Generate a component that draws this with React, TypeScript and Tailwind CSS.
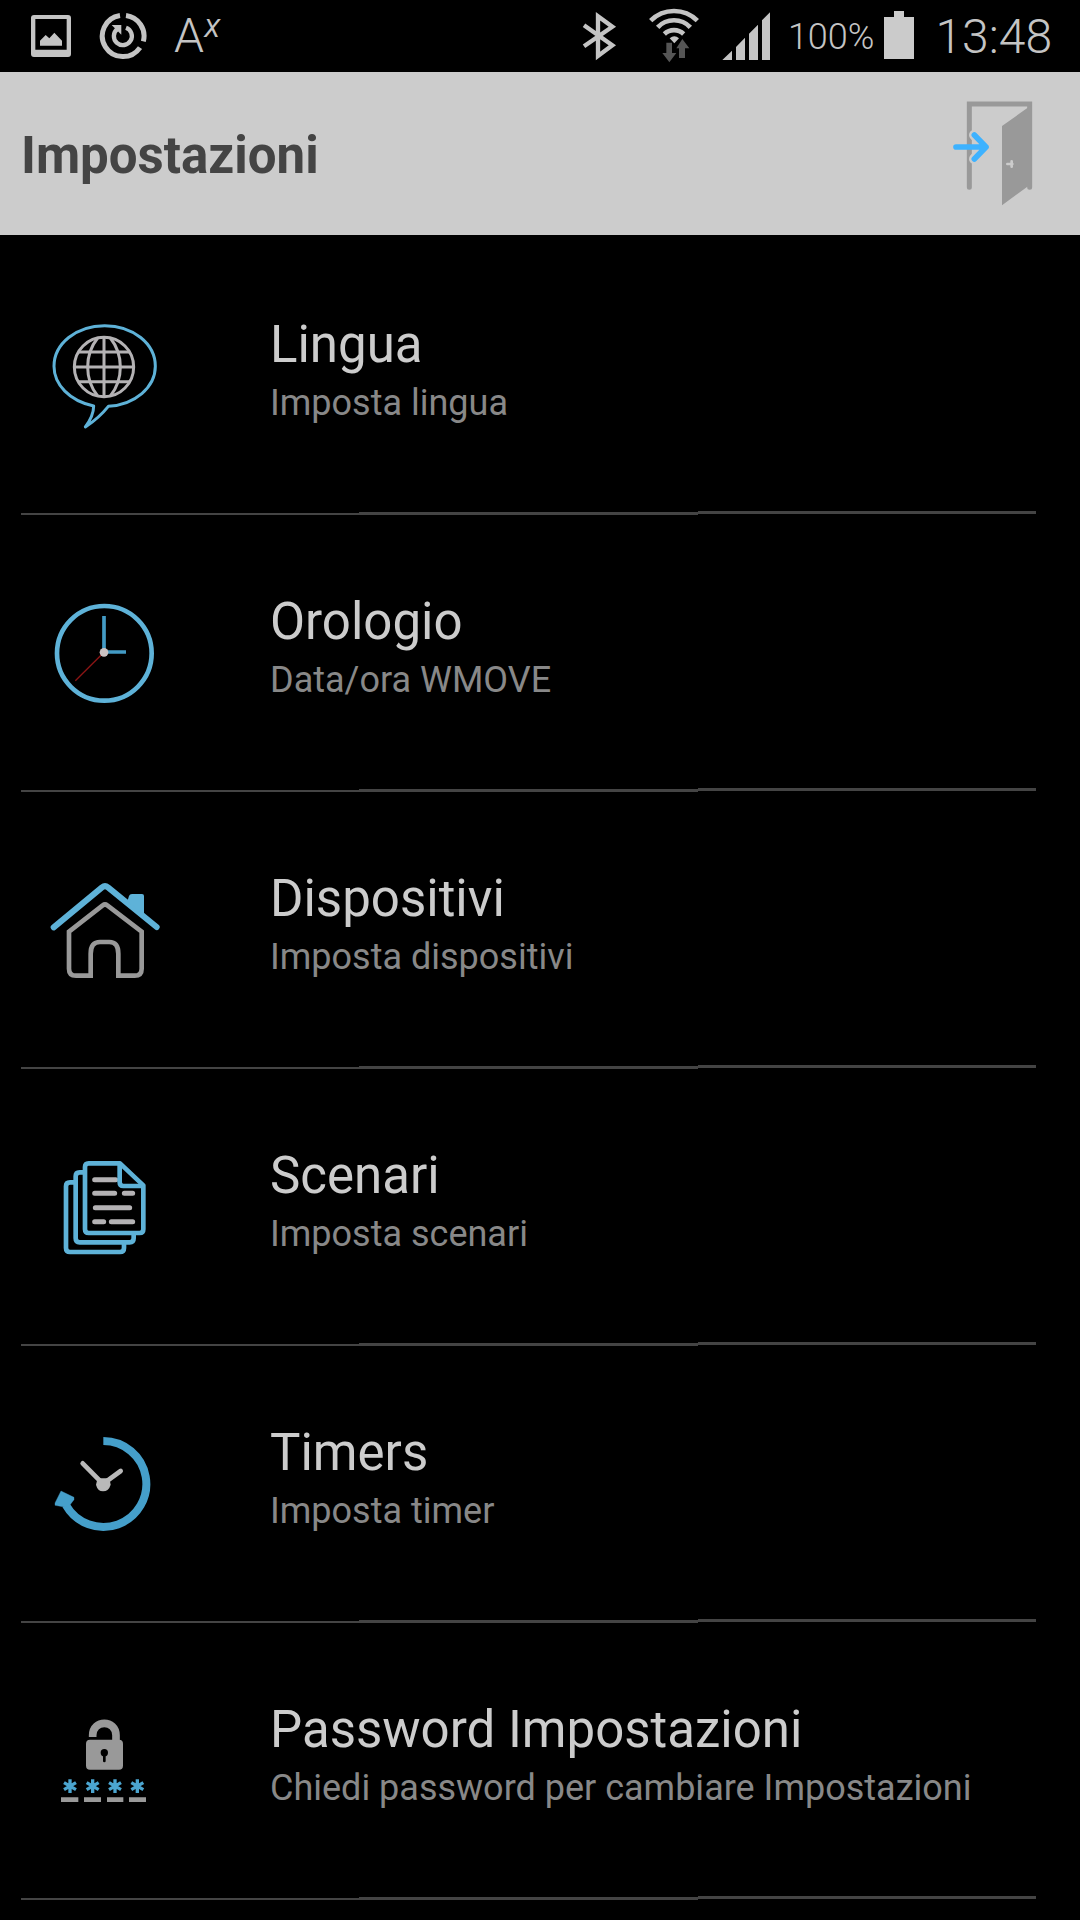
import * as React from "react";

const BLUE = "#5eb2d8";
const GREY = "#b4b2b4";

function ImageIcon() {
  return (
    <svg viewBox="90 0 126 216" className="h-[72px] w-[42px]" fill="#c4c4c4" aria-hidden="true">
      <path fillRule="evenodd" d="M102 45H204Q213 45 213 54V162Q213 171 204 171H102Q93 171 93 162V54Q93 45 102 45ZM106 57V149H200V57Z" />
      <path d="M120 137V122L137 105L148 115L163 98L186 122V137Z" />
    </svg>
  );
}

function SyncIcon() {
  return (
    <svg viewBox="297 0 144 216" className="h-[72px] w-[48px]" fill="none" stroke="#c4c4c4" aria-hidden="true">
      <path d="M360 46.500A62 62 0 1 0 420 143" strokeWidth="15" />
      <path d="M378 46.500A62 62 0 0 1 430 124" strokeWidth="15" />
      <path d="M378 83A27 27 0 1 1 352 87" strokeWidth="13" />
      <path d="M335 75H364V104Z" fill="#c4c4c4" stroke="none" />
    </svg>
  );
}

function BluetoothIcon() {
  return (
    <svg viewBox="66 0 105 216" className="h-[72px] w-[35px]" fill="none" stroke="#c4c4c4" strokeWidth="13" aria-hidden="true">
      <path d="M72 76L157 136L114 168V49L157 80L72 139" />
    </svg>
  );
}

function WifiIcon() {
  return (
    <svg viewBox="267 0 150 216" className="h-[72px] w-[50px]" aria-hidden="true">
      <g fill="none" stroke="#c4c4c4" strokeWidth="14">
        <path d="M272 62A99 99 0 0 1 412 62" />
        <path d="M293 82A67 67 0 0 1 391 82" />
        <path d="M313 102A42 42 0 0 1 371 102" />
      </g>
      <path d="M329 115Q343 102 357 115L343 130Z" fill="#c4c4c4" />
      <path d="M319 128H336V159H349L328 187L307 159H319Z" fill="#555" />
      <path d="M367 117L388 145H375V174H357V145H349Z" fill="#555" />
    </svg>
  );
}

function SignalIcon() {
  return (
    <svg viewBox="486 0 144 216" className="h-[72px] w-[48px]" fill="#c4c4c4" aria-hidden="true">
      <path d="M487 180L516 152V180ZM528 180V141L555 113V180ZM567 180V101L594 74V180ZM606 180V61L630 37V180Z" />
    </svg>
  );
}

function BatteryIcon() {
  return (
    <svg viewBox="972 0 90 216" className="h-[72px] w-[30px]" fill="#cbcbcb" aria-hidden="true">
      <path d="M1002 33H1032V51H1062V177H972V51H1002Z" />
    </svg>
  );
}

function ExitIcon() {
  return (
    <svg viewBox="0 -24 480 489" className="h-[163px] w-[160px]" aria-hidden="true">
      <path d="M148 322V72H329V322" fill="none" stroke="#999" strokeWidth="15" strokeLinecap="round" />
      <path d="M246 138L322 84L336 76V322L322 320L246 376Z" fill="#999" />
      <path d="M262 252H277M275 244V260" stroke="#ccc" strokeWidth="8" strokeLinecap="round" />
      <g fill="none" strokeLinecap="round" strokeLinejoin="round">
        <path d="M163 165L198 200L163 237" stroke="#ccc" strokeWidth="32" />
        <path d="M108 201H198M163 165L198 201L163 237" stroke="#3db2ff" strokeWidth="17" />
      </g>
    </svg>
  );
}

function LanguageIcon() {
  return (
    <svg viewBox="0 0 450 450" className="size-[150px]" fill="none" aria-hidden="true">
      <path d="M191 318C119 303 72 254 72 199C72 131 139 77 224 77C309 77 376 131 376 199C376 262 315 314 235 319Q207 354 166 381Q191 347 191 318Z" stroke={BLUE} strokeWidth="9" strokeLinejoin="round" />
      <g stroke={GREY} strokeWidth="9">
        <circle cx="222" cy="201" r="89" />
        <path d="M222 112V290M133 201H311M147 156H297M147 245H297" />
        <path d="M203 114C163 164 163 238 203 288M241 114C281 164 281 238 241 288" />
      </g>
    </svg>
  );
}

function ClockIcon() {
  return (
    <svg viewBox="0 -9 450 450" className="size-[150px]" fill="none" aria-hidden="true">
      <circle cx="223" cy="220" r="142" stroke={BLUE} strokeWidth="14" />
      <path d="M222 108V216H288" stroke="#439bc5" strokeWidth="11" />
      <path d="M222 217L136 302" stroke="#8c1515" strokeWidth="4" />
      <circle cx="222" cy="217" r="13" fill="#ccc3c3" />
    </svg>
  );
}

function HomeIcon() {
  return (
    <svg viewBox="0 -18 450 450" className="size-[150px]" fill="none" strokeLinecap="round" strokeLinejoin="round" aria-hidden="true">
      <path d="M71 202L216 82Q225 75 234 82L380 201" stroke={BLUE} strokeWidth="18" />
      <path d="M292 124L297 108Q299 102 306 102H336Q342 102 342 108V164Z" fill={BLUE} />
      <path d="M182 347H138Q117 347 117 326V215L218 136Q225 131 232 136L335 215V326Q335 347 314 347H265V281Q265 246 238 246H210Q182 246 182 281Z" stroke="#999" strokeWidth="14" strokeLinejoin="miter" />
    </svg>
  );
}

function ScenesIcon() {
  return (
    <svg viewBox="0 3 450 450" className="size-[150px]" fill="none" strokeLinecap="round" strokeLinejoin="round" aria-hidden="true">
      <path d="M194 149H257M194 190H254M283 190H308M196 233H299M194 275H221M244 275H308" stroke={GREY} strokeWidth="15" />
      <g stroke={BLUE} strokeWidth="14">
        <path d="M270 100H176Q165 100 165 111V298Q165 309 176 309H329Q340 309 340 298V166Z" />
        <path d="M269 102V157Q269 168 280 168H338" />
        <path d="M160 127H149Q137 127 137 139V325Q137 337 149 337H299Q311 337 311 325V314" />
        <path d="M132 157H120Q108 157 108 169V354Q108 366 120 366H270Q282 366 282 354V343" />
      </g>
    </svg>
  );
}

function TimerIcon() {
  return (
    <svg viewBox="0 -6 450 450" className="size-[150px]" fill="none" aria-hidden="true">
      <path d="M220 93A129 129 0 1 1 108 286" stroke="#459fca" strokeWidth="24" />
      <path d="M93 243L132 262V269L118 287L102 291L75 286V279Z" fill="#459fca" stroke="#459fca" strokeLinejoin="round" />
      <path d="M158 160L219 222L272 183" stroke="#b9b9b9" strokeWidth="14" strokeLinecap="round" />
      <path d="M203 205H238L242 224Q236 244 219 244Q203 244 198 224Z" fill="#b9b9b9" />
    </svg>
  );
}

function PasswordIcon() {
  return (
    <svg viewBox="0 -15 450 450" className="size-[150px]" fill="none" aria-hidden="true">
      <rect x="168" y="149" width="111" height="90" rx="12" fill="#999" />
      <path d="M188 141V136C188 88 258 88 258 136V152" stroke="#999" strokeWidth="23" />
      <circle cx="223" cy="188" r="11" fill="#000" />
      <path d="M223 188V213" stroke="#000" strokeWidth="8" strokeLinecap="round" />
      {[120, 188, 255, 322].map((x) => (
        <g key={x} stroke="#4ba5d0" strokeWidth="10">
          <path d={`M${x} 268V309M${x - 18} 278L${x + 18} 299M${x - 18} 299L${x + 18} 278`} />
        </g>
      ))}
      <path d="M93 329H145M162 329H213M231 329H280M297 329H348" stroke="#999" strokeWidth="14" />
    </svg>
  );
}

interface Setting { title: string; summary: string; Icon: () => React.JSX.Element }

const SETTINGS: Setting[] = [
  { title: "Lingua", summary: "Imposta lingua", Icon: LanguageIcon },
  { title: "Orologio", summary: "Data/ora WMOVE", Icon: ClockIcon },
  { title: "Dispositivi", summary: "Imposta dispositivi", Icon: HomeIcon },
  { title: "Scenari", summary: "Imposta scenari", Icon: ScenesIcon },
  { title: "Timers", summary: "Imposta timer", Icon: TimerIcon },
  { title: "Password Impostazioni", summary: "Chiedi password per cambiare Impostazioni", Icon: PasswordIcon },
];

function StatusBar() {
  return (
    <div className="flex h-[72px] items-center pl-[30px] pr-7 text-[#c4c4c4]">
      <ImageIcon />
      <span className="ml-[27px]"><SyncIcon /></span>
      <span className="ml-[27px] flex items-center">
        <span className="text-[48px] font-light leading-[74px]">A</span>
        <span className="pb-4 text-[26px] italic leading-none">X</span>
      </span>
      <span className="ml-auto"><BluetoothIcon /></span>
      <span className="ml-8"><WifiIcon /></span>
      <span className="ml-[23px]"><SignalIcon /></span>
      <span className="ml-[18px] pt-0.5 text-[36px] font-light leading-[74px]">100%</span>
      <span className="ml-2.5"><BatteryIcon /></span>
      <span className="ml-[21px] pt-0.5 text-[48px] font-light leading-[74px]">13:48</span>
    </div>
  );
}

// The rule thickens and steps up slightly from left to right.
function Divider() {
  return (
    <div className="ml-[21px] mr-11 flex h-1" aria-hidden="true">
      <div className="mt-0.5 h-0.5 flex-1 bg-[#444]" />
      <div className="mt-px h-[3px] flex-1 bg-[#444]" />
      <div className="h-[3px] flex-1 bg-[#444]" />
    </div>
  );
}

export default function App() {
  return (
    <div className="min-h-screen bg-black font-[Roboto,sans-serif]">
      <StatusBar />
      <header className="flex h-[163px] items-center justify-between bg-[#ccc] pl-[21px]">
        <h1 className="pt-1.5 text-[51px] font-bold text-[#444]">Impostazioni</h1>
        <button type="button" aria-label="Esci"><ExitIcon /></button>
      </header>
      <ul className="pt-[3px]">
        {SETTINGS.map(({ title, summary, Icon }) => (
          <li key={title}>
            <button type="button" className="flex h-[273px] w-full items-start gap-[90px] px-[30px] text-left">
              <span className="shrink-0 pt-[62px]"><Icon /></span>
              <span className="min-w-0 flex-1 pt-[73px]">
                <span className="block text-[51px] leading-[68px] text-[#ccc]">{title}</span>
                <span className="block text-[36px] leading-[48px] text-[#888]">{summary}</span>
              </span>
            </button>
            <Divider />
          </li>
        ))}
      </ul>
    </div>
  );
}
